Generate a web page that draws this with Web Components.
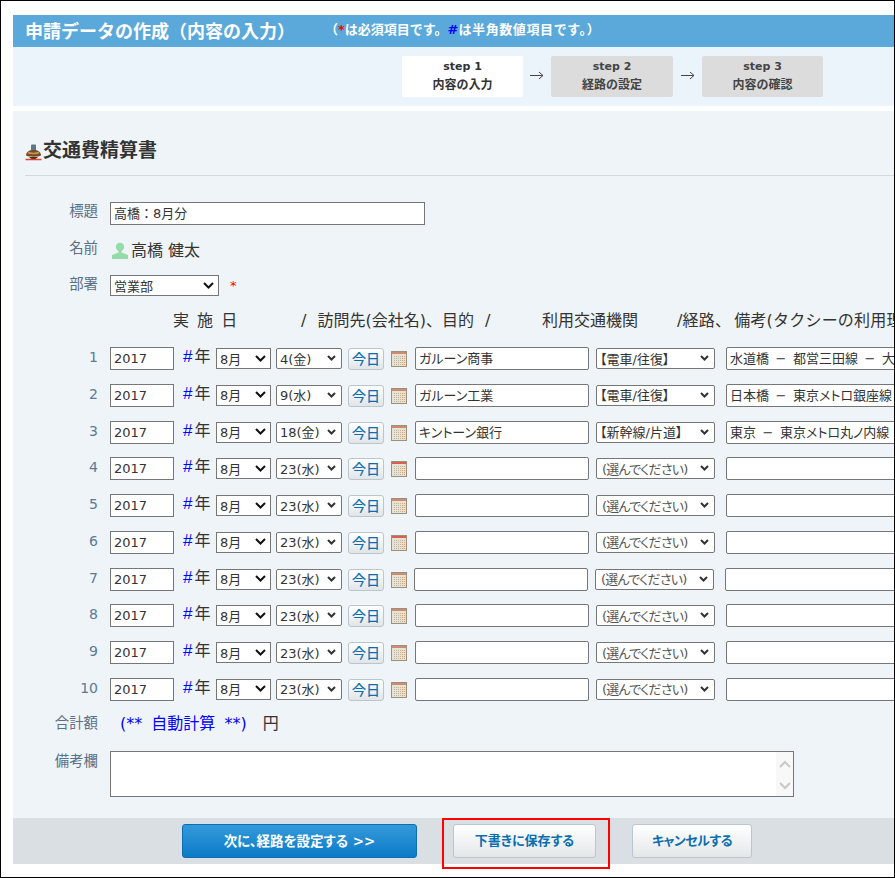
<!DOCTYPE html>
<html lang="ja">
<head>
<meta charset="utf-8">
<title>交通費精算書</title>
<style>
    html, body { margin: 0; background: #fff; }
    body {
        font-family: "DejaVu Sans", "Noto Sans CJK JP", sans-serif;
        color: #333;
    }
</style>
</head>
<body>

<app-frame>
    <page-header slot="top"></page-header>
    <step-bar slot="top"></step-bar>
    <form-panel></form-panel>
    <form-actions slot="bottom"></form-actions>
</app-frame>

<script>
class AppFrame extends HTMLElement {
    constructor() {
        super();
        this.attachShadow({mode: 'open'}).innerHTML = `
            <style>
                :host {
                    display: flex;
                    flex-direction: column;
                    box-sizing: border-box;
                    width: 895px;
                    height: 878px;
                    border: 1px solid #000;
                    padding: 14px 0 0 12px;
                    overflow: hidden;
                    background: #fff;
                }
                .gap { height: 5px; flex: none; }
            </style>
            <slot name="top"></slot>
            <div class="gap"></div>
            <slot></slot>
            <slot name="bottom"></slot>
        `;
    }
}

class PageHeader extends HTMLElement {
    constructor() {
        super();
        this.attachShadow({mode: 'open'}).innerHTML = `
            <style>
                :host {
                    display: flex;
                    box-sizing: border-box;
                    height: 32px;
                    padding-left: 12px;
                    background: #5ba8da;
                    color: #fff;
                    white-space: nowrap;
                }
                h1 { margin: 0; width: 300px; font-size: 18px; line-height: 34px; font-weight: 700; }
                p { margin: 0; font-size: 13px; line-height: 29px; font-weight: 700; }
                .red { color: #f00; }
                .blue { color: #00f; }
                .wide { letter-spacing: 0.6px; }
            </style>
            <h1>申請データの作成（内容の入力）</h1>
            <p>（<span class="red">*</span>は必須項目です。<span class="blue">#</span><span class="wide">は半角数値項目です。）</span></p>
        `;
    }
}

class StepBar extends HTMLElement {
    constructor() {
        super();
        this.attachShadow({mode: 'open'}).innerHTML = `
            <style>
                :host {
                    display: flex;
                    box-sizing: border-box;
                    height: 59px;
                    padding: 9px 0 0 389px;
                    background: #ebf4fb;
                }
                .arrow {
                    width: 28px;
                    display: flex;
                    justify-content: center;
                    padding-top: 15px;
                    box-sizing: border-box;
                }
            </style>
            <step-item current num="step 1" name="内容の入力" style="width:121px"></step-item>
            <div class="arrow"><svg width="14" height="9" viewBox="0 0 14 9"><path d="M0 4.500H13M9 1l4 3.500L9 8" fill="none" stroke="#444" stroke-width="1"/></svg></div>
            <step-item num="step 2" name="経路の設定" style="width:122px"></step-item>
            <div class="arrow" style="width:29px"><svg width="14" height="9" viewBox="0 0 14 9"><path d="M0 4.500H13M9 1l4 3.500L9 8" fill="none" stroke="#444" stroke-width="1"/></svg></div>
            <step-item num="step 3" name="内容の確認" style="width:121px"></step-item>
        `;
    }
}

class StepItem extends HTMLElement {
    constructor() {
        super();
        this.attachShadow({mode: 'open'}).innerHTML = `
            <style>
                :host {
                    display: block;
                    box-sizing: border-box;
                    height: 41px;
                    border-radius: 2px;
                    background: #dcdcdc;
                    color: #444;
                    text-align: center;
                    font-size: 12px;
                    font-weight: 700;
                    line-height: 18px;
                    padding-top: 2px;
                    font-feature-settings: "palt";
                }
                :host([current]) { background: #fff; color: #333; }
                div { white-space: nowrap; }
                .num { font-size: 11px; }
            </style>
            <div class="num">${this.getAttribute("num")}</div>
            <div>${this.getAttribute("name")}</div>
        `;
    }
}

class UiField extends HTMLElement {
    constructor() {
        super();
        this.attachShadow({mode: 'open'}).innerHTML = `
            <style>
                :host {
                    display: block;
                    flex: none;
                    box-sizing: border-box;
                    height: 23px;
                    padding: 0 3px;
                    border: 1px solid #767676;
                    background: #fff;
                    color: #333;
                    font-size: 13px;
                    line-height: 22px;
                    white-space: nowrap;
                    overflow: hidden;
                    font-feature-settings: "palt";
                }
                :host([round]) { border-radius: 2px; }
            </style>
            <slot></slot>
        `;
    }
}

class UiSelect extends HTMLElement {
    constructor() {
        super();
        const big = this.hasAttribute("big");
        this.attachShadow({mode: 'open'}).innerHTML = `
            <style>
                :host {
                    display: flex;
                    flex: none;
                    align-items: center;
                    justify-content: space-between;
                    box-sizing: border-box;
                    height: 21px;
                    padding: 0 ${big ? 4 : 5}px 1px 3px;
                    border: 1px solid #767676;
                    border-radius: ${big ? 0 : 2}px;
                    background: #fff;
                    color: #333;
                    font-size: 13px;
                    white-space: nowrap;
                    overflow: hidden;
                    font-feature-settings: "palt";
                }
                :host([hint]) { padding-left: 5px; color: #555; letter-spacing: -0.8px; }
                svg { flex: none; }
            </style>
            <span><slot></slot></span>
            ${big
                ? `<svg width="11" height="7" viewBox="0 0 11 7"><path d="M1 1l4.500 4.500L10 1" fill="none" stroke="#111" stroke-width="2"/></svg>`
                : `<svg width="9" height="6" viewBox="0 0 9 6"><path d="M1 1l3.500 3.500L8 1" fill="none" stroke="#333" stroke-width="2"/></svg>`}
        `;
    }
}

class TodayButton extends HTMLElement {
    constructor() {
        super();
        this.attachShadow({mode: 'open'}).innerHTML = `
            <style>
                :host {
                    display: block;
                    flex: none;
                    box-sizing: border-box;
                    width: 36px;
                    height: 22px;
                    margin-top: 1px;
                    border: 1px solid #b9c6cb;
                    border-radius: 3px;
                    background: linear-gradient(#fff, #e2e5e8);
                    color: #0a6cb0;
                    font-size: 14px;
                    line-height: 21px;
                    text-align: center;
                    -webkit-text-stroke: 0.2px #0a6cb0;
                }
            </style>
            今日
        `;
    }
}

class CalIcon extends HTMLElement {
    constructor() {
        super();
        const hot = this.hasAttribute("hot");
        this.attachShadow({mode: 'open'}).innerHTML = `
            <style>
                :host { display: block; flex: none; width: 16px; height: 16px; }
                svg { display: block; }
            </style>
            <svg width="16" height="16" viewBox="0 0 16 16">
                <rect x="0.5" y="0.5" width="15" height="15" fill="#e8e2d2" stroke="#98917f"/>
                <rect x="1" y="1" width="14" height="2" fill="${hot ? "#d8604f" : "#cf8a73"}"/>
                <path d="M3 5.500H13M3 7.500H13M3 9.500H13M3 11.500H13M3 13.500H13" stroke="#bdb7a5" stroke-dasharray="1 1"/>
                <path d="M11 5.500H14M11 7.500H14M11 9.500H14M11 11.500H14M11 13.500H14" stroke="#e0a070" stroke-dasharray="1 1"/>
            </svg>
        `;
    }
}

class FormRow extends HTMLElement {
    constructor() {
        super();
        this.attachShadow({mode: 'open'}).innerHTML = `
            <style>
                :host {
                    display: flex;
                    align-items: var(--row-align, center);
                    flex: none;
                }
                label {
                    flex: none;
                    box-sizing: border-box;
                    width: 73px;
                    margin-right: 12px;
                    padding: var(--label-top, 0) 0 var(--label-bottom, 6px);
                    color: #5b7086;
                    font-size: 14.4px;
                    line-height: 16px;
                    text-align: right;
                    white-space: nowrap;
                }
            </style>
            <label>${this.getAttribute("label") || ""}</label>
            <slot></slot>
        `;
    }
}

class ExpenseRow extends HTMLElement {
    constructor() {
        super();
        const a = n => this.getAttribute(n) || "";
        const way = a("way");
        this.attachShadow({mode: 'open'}).innerHTML = `
            <style>
                :host {
                    display: flex;
                    align-items: flex-start;
                    box-sizing: border-box;
                    height: 36.78px;
                }
                .no {
                    flex: none;
                    box-sizing: border-box;
                    width: 85px;
                    padding-right: 12px;
                    color: #5b7a96;
                    font-size: 14px;
                    line-height: 20px;
                    text-align: right;
                }
                .yr {
                    flex: none;
                    box-sizing: border-box;
                    width: 42px;
                    padding-left: 9px;
                    font-size: 16px;
                    line-height: 20px;
                    white-space: nowrap;
                }
                .yr b {
                    font: 400 17px/20px "Liberation Sans", sans-serif;
                    color: #00f;
                    margin-right: 2px;
                }
                ui-select { margin-top: 1px; }
                cal-icon { margin: 4px 8px 0 7px; }
                :host([nudge]) cal-icon { margin-right: 7px; }
            </style>
            <div class="no">${a("no")}</div>
            <ui-field style="width:64px">2017</ui-field>
            <div class="yr"><b>#</b>年</div>
            <ui-select big style="width:55px">8月</ui-select>
            <ui-select style="width:66px;margin-left:5px">${a("day")}</ui-select>
            <today-button style="margin-left:6px"></today-button>
            <cal-icon ${this.hasAttribute("hot") ? "hot" : ""}></cal-icon>
            <ui-field round style="width:174px">${a("place")}</ui-field>
            <ui-select ${way ? "" : "hint"} style="width:119px;margin-left:7px">${way || "(選んでください)"}</ui-select>
            <ui-field round style="width:240px;margin-left:11px;word-spacing:2.4px">${a("route")}</ui-field>
        `;
    }
}

class FormPanel extends HTMLElement {
    constructor() {
        super();
        const rows = [
            ["1", "4(金)", "ガルーン商事", "【電車/往復】", "水道橋 − 都営三田線 − 大"],
            ["2", "9(水)", "ガルーン工業", "【電車/往復】", "日本橋 − 東京メトロ銀座線"],
            ["3", "18(金)", "キントーン銀行", "【新幹線/片道】", "東京 − 東京メトロ丸ノ内線 −"],
            ["4"], ["5"], ["6"], ["7"], ["8"], ["9"], ["10"]
        ].map(([no, day = "23(水)", place = "", way = "", route = ""]) =>
            `<expense-row no="${no}" day="${day}" place="${place}" way="${way}" route="${route}"
                ${no == "4" || no == "6" ? "hot" : ""} ${no == "7" ? "nudge" : ""}></expense-row>`
        ).join("");
        this.attachShadow({mode: 'open'}).innerHTML = `
            <style>
                :host {
                    display: flex;
                    flex-direction: column;
                    flex: none;
                    box-sizing: border-box;
                    height: 707px;
                    padding: 30px 0 0 12px;
                    background: #eff4f8;
                }
                .heading {
                    display: flex;
                    align-items: flex-start;
                    flex: none;
                    box-sizing: border-box;
                    height: 35px;
                    border-bottom: 1px solid #d5d9dc;
                    font-size: 19px;
                    font-weight: 700;
                    line-height: 19px;
                    color: #333;
                }
                .heading svg { flex: none; margin: 3px 1px 0 0; }
                .name { display: flex; align-items: center; height: 17px; line-height: 17px; font-size: 16px; color: #333; white-space: nowrap; }
                .name svg { margin: 0 3px 0 2px; }
                .req { color: #f00; font-size: 13px; margin-left: 11px; }
                .cols {
                    display: flex;
                    flex: none;
                    height: 35px;
                    margin-top: 16px;
                    font-size: 16px;
                    line-height: 18px;
                    word-spacing: 3px;
                    white-space: nowrap;
                    color: #333;
                }
                .cols > span { flex: none; }
                .total { display: flex; height: 20px; line-height: 20px; font-size: 16px; white-space: nowrap; }
                .total b { font-weight: 400; color: #00f; word-spacing: 4px; }
                .total span { margin-left: 16px; }
                .memo {
                    position: relative;
                    box-sizing: border-box;
                    width: 684px;
                    height: 46px;
                    border: 1px solid #767676;
                    background: #fff;
                }
                .bar {
                    position: absolute;
                    top: 0;
                    right: 0;
                    bottom: 0;
                    width: 17px;
                    display: flex;
                    flex-direction: column;
                    justify-content: space-between;
                    align-items: center;
                    padding: 8px 0 6px;
                    box-sizing: border-box;
                    background: #f8f8f8;
                }
            </style>
            <div class="heading">
                <svg width="17" height="17" viewBox="0 0 17 17">
                    <rect x="6" y="0.500" width="5" height="6" rx="1" fill="#5f7684"/>
                    <path d="M1 11.500c0-3.500 3-5.500 7.500-5.500s7.500 2 7.500 5.500c-2 1.600-13 1.600-15 0z" fill="#7a4c22"/>
                    <path d="M3 8.500c2 1.200 9 1.200 11 0" stroke="#c39a62" fill="none" stroke-width="1.500"/>
                    <path d="M4 13h9l-2.500 2h-4z" fill="#4d2f14"/>
                    <path d="M0.500 15.500h16" stroke="#d9472f" stroke-width="1.500"/>
                </svg>
                交通費精算書
            </div>
            <form-row label="標題" style="margin-top:26px">
                <ui-field style="width:315px;font-feature-settings:normal">高橋：8月分</ui-field>
            </form-row>
            <form-row label="名前" style="margin-top:17px;height:17px">
                <div class="name">
                    <svg width="16" height="17" viewBox="0 0 16 17">
                        <circle cx="8" cy="5" r="4.200" fill="#94dca8"/>
                        <path d="M6.500 8h3v2.500L16 13v4H0v-4l6.500-2.500z" fill="#94dca8"/>
                    </svg>
                    高橋 健太
                </div>
            </form-row>
            <form-row label="部署" style="margin-top:16px;height:21px;--label-bottom:3px">
                <ui-select big style="width:109px">営業部</ui-select>
                <span class="req">*</span>
            </form-row>
            <div class="cols">
                <span style="margin-left:148px;width:128px">実 施 日</span>
                <span style="width:241px;word-spacing:6px">/ 訪問先(会社名)、目的 /</span>
                <span style="width:135px">利用交通機関</span>
                <span style="letter-spacing:0.2px"><span style="margin-right:3px">/経路、</span>備考(タクシーの利用理</span>
            </div>
            ${rows}
            <form-row label="合計額" style="height:20px;margin-top:-1px;--label-bottom:2px">
                <div class="total"><b style="margin-left:10px">(** 自動計算 **)</b><span>円</span></div>
            </form-row>
            <form-row label="備考欄" style="margin-top:17px;--row-align:flex-start;--label-top:2px">
                <div class="memo">
                    <div class="bar">
                        <svg width="12" height="8" viewBox="0 0 12 8"><path d="M1 7l5-5 5 5" fill="none" stroke="#c8c8c8" stroke-width="2"/></svg>
                        <svg width="12" height="8" viewBox="0 0 12 8"><path d="M1 1l5 5 5-5" fill="none" stroke="#c8c8c8" stroke-width="2"/></svg>
                    </div>
                </div>
            </form-row>
        `;
    }
}

class ActionButton extends HTMLElement {
    constructor() {
        super();
        this.attachShadow({mode: 'open'}).innerHTML = `
            <style>
                :host {
                    display: block;
                    flex: none;
                    box-sizing: border-box;
                    height: 34px;
                    border: 1px solid #b9c6cb;
                    border-radius: 3px;
                    background: linear-gradient(#fff, #e4e7e9);
                    color: #0a6eb0;
                    font-size: 13px;
                    font-weight: 700;
                    line-height: 32px;
                    text-align: center;
                    white-space: nowrap;
                    font-feature-settings: "palt";
                }
                :host([primary]) {
                    border-color: #0e6cb0;
                    background: linear-gradient(#349ada, #0c7bc8);
                    color: #fff;
                    font-size: 13.5px;
                }
            </style>
            <slot></slot>
        `;
    }
}

class FormActions extends HTMLElement {
    constructor() {
        super();
        this.attachShadow({mode: 'open'}).innerHTML = `
            <style>
                :host {
                    display: flex;
                    position: relative;
                    flex: none;
                    box-sizing: border-box;
                    height: 46px;
                    padding: 6px 0 0 169px;
                    gap: 36px;
                    background: #dadfe3;
                }
                .mark {
                    position: absolute;
                    left: 429px;
                    top: 0;
                    width: 168px;
                    height: 51px;
                    box-sizing: border-box;
                    border: 2px solid #f00;
                }
            </style>
            <action-button primary style="width:235px">次に、経路を設定する &gt;&gt;</action-button>
            <action-button style="width:143px">下書きに保存する</action-button>
            <action-button style="width:120px;letter-spacing:-0.5px">キャンセルする</action-button>
            <div class="mark"></div>
        `;
    }
}

customElements.define("app-frame", AppFrame);
customElements.define("page-header", PageHeader);
customElements.define("step-bar", StepBar);
customElements.define("step-item", StepItem);
customElements.define("ui-field", UiField);
customElements.define("ui-select", UiSelect);
customElements.define("today-button", TodayButton);
customElements.define("cal-icon", CalIcon);
customElements.define("form-row", FormRow);
customElements.define("expense-row", ExpenseRow);
customElements.define("form-panel", FormPanel);
customElements.define("action-button", ActionButton);
customElements.define("form-actions", FormActions);
</script>
</body>
</html>
